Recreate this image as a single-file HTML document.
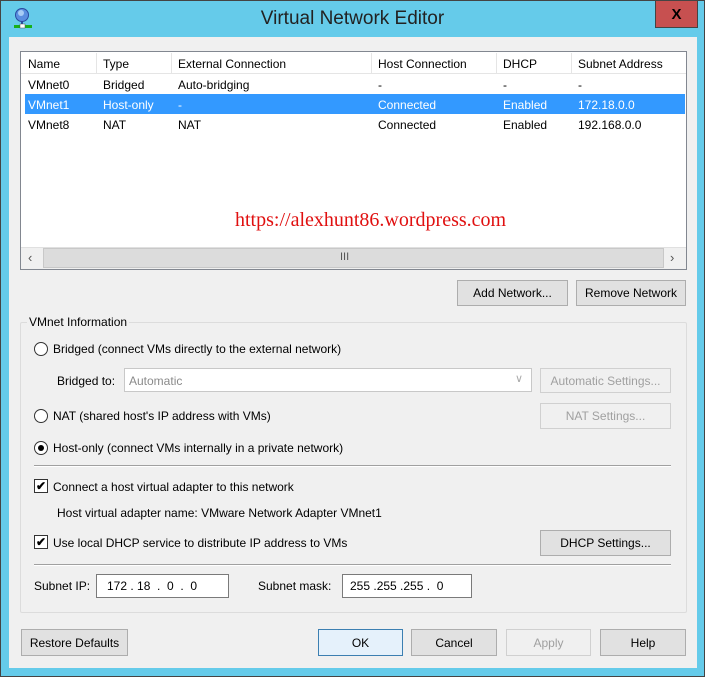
<!DOCTYPE html>
<html><head><style>
*{margin:0;padding:0;box-sizing:border-box}
body{width:705px;height:680px;background:#fff;font-family:"Liberation Sans",sans-serif;font-size:12px;color:#000;position:relative;overflow:hidden}
.a{position:absolute;white-space:nowrap}
.btn{position:absolute;background:#e1e1e1;border:1px solid #adadad;text-align:center;font-size:12px;display:flex;align-items:center;justify-content:center}
.dis{color:#a0a0a0;background:#f0f0f0;border-color:#d0d0d0}
.sep{position:absolute;height:1px;background:#a0a0a0;border-bottom:1px solid #fff;height:2px}
.radio{position:absolute;width:14px;height:14px;border:1px solid #333;border-radius:50%;background:#fff}
.chk{position:absolute;width:14px;height:14px;border:1px solid #333;background:#fff;font-size:12px;line-height:12px;text-align:center;font-weight:bold}
.inp{position:absolute;background:#fff;border:1px solid #7a7a7a}
</style></head><body>
<div class="a" style="left:0;top:0;width:705px;height:677px;background:#65cbea;border:1px solid #444"></div>
<div class="a" style="left:655px;top:0;width:43px;height:28px;background:#c75050;border:1px solid #444;color:#000;font-weight:bold;font-size:15px;text-align:center;line-height:28px">X</div>
<svg class="a" style="left:13px;top:7px" width="20" height="22"><circle cx="9" cy="8" r="6.5" fill="#5a8ee0" stroke="#2a4aa0"/><circle cx="8" cy="6" r="3" fill="#a8ccf5"/><rect x="8" y="14" width="2" height="4" fill="#2a4aa0"/><rect x="1" y="18" width="18" height="3" fill="#18b018"/><rect x="7" y="17" width="5" height="4" fill="#fff" stroke="#555" stroke-width=".5"/></svg>
<div class="a" style="left:0;width:705px;top:8px;text-align:center;font-size:19px;color:#222">Virtual Network Editor</div>
<div class="a" style="left:9px;top:37px;width:688px;height:631px;background:#f0f0f0"></div>
<div class="a" style="left:20px;top:51px;width:667px;height:219px;background:#fff;border:1px solid #828790"></div>
<div class="a" style="left:21px;top:52px;width:665px;height:22px;background:#fff;border-bottom:1px solid #e5e5e5"></div>
<div class="a" style="left:96px;top:53px;width:1px;height:20px;background:#e5e5e5"></div>
<div class="a" style="left:171px;top:53px;width:1px;height:20px;background:#e5e5e5"></div>
<div class="a" style="left:371px;top:53px;width:1px;height:20px;background:#e5e5e5"></div>
<div class="a" style="left:496px;top:53px;width:1px;height:20px;background:#e5e5e5"></div>
<div class="a" style="left:571px;top:53px;width:1px;height:20px;background:#e5e5e5"></div>
<div class="a" style="left:28px;top:57px">Name</div><div class="a" style="left:103px;top:57px">Type</div><div class="a" style="left:178px;top:57px">External Connection</div><div class="a" style="left:378px;top:57px">Host Connection</div><div class="a" style="left:503px;top:57px">DHCP</div><div class="a" style="left:578px;top:57px">Subnet Address</div>
<div class="a" style="left:28px;top:78px">VMnet0</div><div class="a" style="left:103px;top:78px">Bridged</div><div class="a" style="left:178px;top:78px">Auto-bridging</div><div class="a" style="left:378px;top:78px">-</div><div class="a" style="left:503px;top:78px">-</div><div class="a" style="left:578px;top:78px">-</div>
<div class="a" style="left:25px;top:94px;width:660px;height:20px;background:#3399ff"></div>
<div class="a" style="left:28px;top:98px;color:#fff">VMnet1</div><div class="a" style="left:103px;top:98px;color:#fff">Host-only</div><div class="a" style="left:178px;top:98px;color:#fff">-</div><div class="a" style="left:378px;top:98px;color:#fff">Connected</div><div class="a" style="left:503px;top:98px;color:#fff">Enabled</div><div class="a" style="left:578px;top:98px;color:#fff">172.18.0.0</div>
<div class="a" style="left:28px;top:118px">VMnet8</div><div class="a" style="left:103px;top:118px">NAT</div><div class="a" style="left:178px;top:118px">NAT</div><div class="a" style="left:378px;top:118px">Connected</div><div class="a" style="left:503px;top:118px">Enabled</div><div class="a" style="left:578px;top:118px">192.168.0.0</div>
<div class="a" style="left:235px;top:209px;font-family:'Liberation Serif',serif;font-size:20px;color:#e01010">https://alexhunt86.wordpress.com</div>
<div class="a" style="left:21px;top:247px;width:665px;height:22px;background:#f0f0f0;border-top:1px solid #e0e0e0"></div>
<div class="a" style="left:43px;top:248px;width:621px;height:20px;background:#dcdcdc;border:1px solid #c8c8c8"></div>
<div class="a" style="left:28px;top:250px;color:#555;font-size:13px">&lsaquo;</div>
<div class="a" style="left:670px;top:250px;color:#555;font-size:13px">&rsaquo;</div>
<div class="a" style="left:340px;top:251px;color:#555;font-size:11px">III</div>
<div class="btn" style="left:457px;top:280px;width:111px;height:26px">Add Network...</div>
<div class="btn" style="left:576px;top:280px;width:110px;height:26px">Remove Network</div>
<div class="a" style="left:20px;top:322px;width:667px;height:291px;border:1px solid #dcdcdc;border-radius:2px"></div>
<div class="a" style="left:27px;top:315px;background:#f0f0f0;padding:0 2px">VMnet Information</div>
<div class="radio" style="left:34px;top:342px"></div><div class="a" style="left:53px;top:342px">Bridged (connect VMs directly to the external network)</div>
<div class="a" style="left:57px;top:374px">Bridged to:</div>
<div class="inp" style="left:124px;top:368px;width:408px;height:24px;border-color:#c8c8c8"></div>
<div class="a" style="left:129px;top:374px;color:#8a8a8a">Automatic</div>
<div class="a" style="left:515px;top:372px;color:#aaa;font-size:11px">&#8744;</div>
<div class="btn dis" style="left:540px;top:368px;width:131px;height:25px">Automatic Settings...</div>
<div class="radio" style="left:34px;top:409px"></div><div class="a" style="left:53px;top:409px">NAT (shared host's IP address with VMs)</div>
<div class="btn dis" style="left:540px;top:403px;width:131px;height:26px">NAT Settings...</div>
<div class="radio" style="left:34px;top:441px"><div style="position:absolute;left:3px;top:3px;width:6px;height:6px;border-radius:50%;background:#000"></div></div><div class="a" style="left:53px;top:441px">Host-only (connect VMs internally in a private network)</div>
<div class="sep" style="left:34px;top:465px;width:637px"></div>
<div class="chk" style="left:34px;top:479px">&#10004;</div><div class="a" style="left:53px;top:480px">Connect a host virtual adapter to this network</div>
<div class="a" style="left:57px;top:506px">Host virtual adapter name: VMware Network Adapter VMnet1</div>
<div class="chk" style="left:34px;top:535px">&#10004;</div><div class="a" style="left:53px;top:536px">Use local DHCP service to distribute IP address to VMs</div>
<div class="btn" style="left:540px;top:530px;width:131px;height:26px">DHCP Settings...</div>
<div class="sep" style="left:34px;top:564px;width:637px"></div>
<div class="a" style="left:34px;top:579px">Subnet IP:</div>
<div class="inp" style="left:96px;top:574px;width:133px;height:24px"></div>
<div class="a" style="left:107px;top:579px">172 . 18 &nbsp;. &nbsp;0 &nbsp;. &nbsp;0</div>
<div class="a" style="left:258px;top:579px">Subnet mask:</div>
<div class="inp" style="left:342px;top:574px;width:130px;height:24px"></div>
<div class="a" style="left:350px;top:579px">255 .255 .255 . &nbsp;0</div>
<div class="btn" style="left:21px;top:629px;width:107px;height:27px">Restore Defaults</div>
<div class="btn" style="left:318px;top:629px;width:85px;height:27px;border-color:#3c7fb1;background:#e5f1fb">OK</div>
<div class="btn" style="left:411px;top:629px;width:86px;height:27px">Cancel</div>
<div class="btn dis" style="left:506px;top:629px;width:85px;height:27px">Apply</div>
<div class="btn" style="left:600px;top:629px;width:86px;height:27px">Help</div>
</body></html>
